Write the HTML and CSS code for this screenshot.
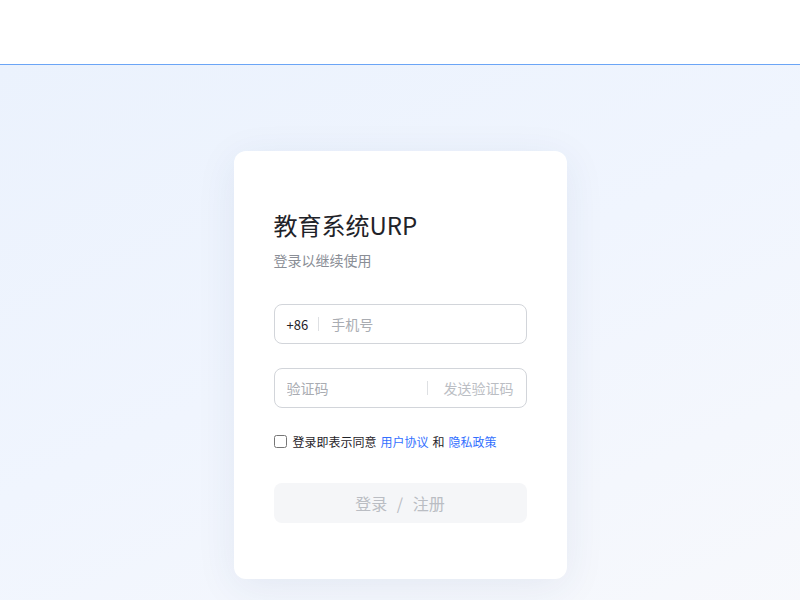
FILE: index.html
```html
<!DOCTYPE html>
<html lang="zh-CN">
  <head>
    <meta charset="UTF-8" />
    <meta name="viewport" content="width=device-width, initial-scale=1.0" />
    <title>教育系统URP</title>
    <link rel="stylesheet" href="styles.css">
  </head>
  <body>
    <div class="topbar"></div>
    <div class="main">
      <div class="card">
        <h1 class="title">教育系统URP</h1>
        <p class="subtitle">登录以继续使用</p>

        <div class="field">
          <span class="prefix">+86</span>
          <span class="divider"></span>
          <input class="fieldInput" placeholder="手机号" />
        </div>

        <div class="field codeField">
          <input class="fieldInput" placeholder="验证码" />
          <span class="divider"></span>
          <span class="sendCode">发送验证码</span>
        </div>

        <label class="agree">
          <input type="checkbox" />
          <span>登录即表示同意</span>
          <a href="#">用户协议</a>
          <span>和</span>
          <a href="#">隐私政策</a>
        </label>

        <button class="submit">登录 / 注册</button>
      </div>
    </div>
  </body>
</html>
```

FILE: styles.css
```css
* {
  box-sizing: border-box;
}
body {
  margin: 0;
  font-family: "Noto Sans CJK SC", "Noto Sans", sans-serif;
  color: #1f2329;
  background: #fff;
}
.topbar {
  height: 65px;
  background: #fff;
  border-bottom: 1px solid #6ba5f6;
}
.main {
  min-height: 100vh;
  display: flex;
  align-items: center;
  justify-content: center;
  background: linear-gradient(155deg, #ebf2fd 0%, #f0f5fe 45%, #f8f9fc 100%);
}
.card {
  width: 333px;
  padding: 56px 40px;
  background: #fff;
  border-radius: 12px;
  box-shadow: 0 8px 40px rgba(40, 60, 110, 0.08);
}
.title {
  margin: 0;
  font-size: 24px;
  line-height: 36px;
  font-weight: 400;
  color: #1f2329;
}
.subtitle {
  margin: 7px 0 34px;
  font-size: 14px;
  line-height: 20px;
  color: #8a8e96;
}
.field {
  display: flex;
  align-items: center;
  height: 40px;
  padding: 0 12px;
  border: 1px solid #d2d5da;
  border-radius: 8px;
  font-size: 14px;
}
.codeField {
  margin-top: 24px;
}
.prefix {
  color: #1f2329;
  font-size: 13px;
}
.divider {
  width: 1px;
  height: 14px;
  background: #dee0e3;
  margin: 0 12px 0 10px;
}
.codeField .divider {
  margin: 0 16px 0 10px;
}
.fieldInput {
  flex: 1;
  min-width: 0;
  border: none;
  outline: none;
  padding: 0;
  font-family: inherit;
  font-size: 14px;
  color: #1f2329;
  background: transparent;
}
.fieldInput::placeholder {
  color: #a9acb2;
}
.sendCode {
  color: #bbbec4;
  white-space: nowrap;
}
.agree {
  display: flex;
  align-items: center;
  gap: 4px;
  height: 20px;
  margin-top: 23px;
  font-size: 12px;
  color: #1f2329;
}
.agree input {
  width: 13px;
  height: 13px;
  margin: 0 2px 0 0;
}
.agree a {
  color: #3370ff;
  text-decoration: none;
}
.submit {
  display: block;
  width: 100%;
  height: 40px;
  margin-top: 32px;
  border: none;
  border-radius: 8px;
  background: #f5f6f8;
  color: #babdc3;
  font-family: inherit;
  font-size: 16px;
  word-spacing: 6px;
}
```
